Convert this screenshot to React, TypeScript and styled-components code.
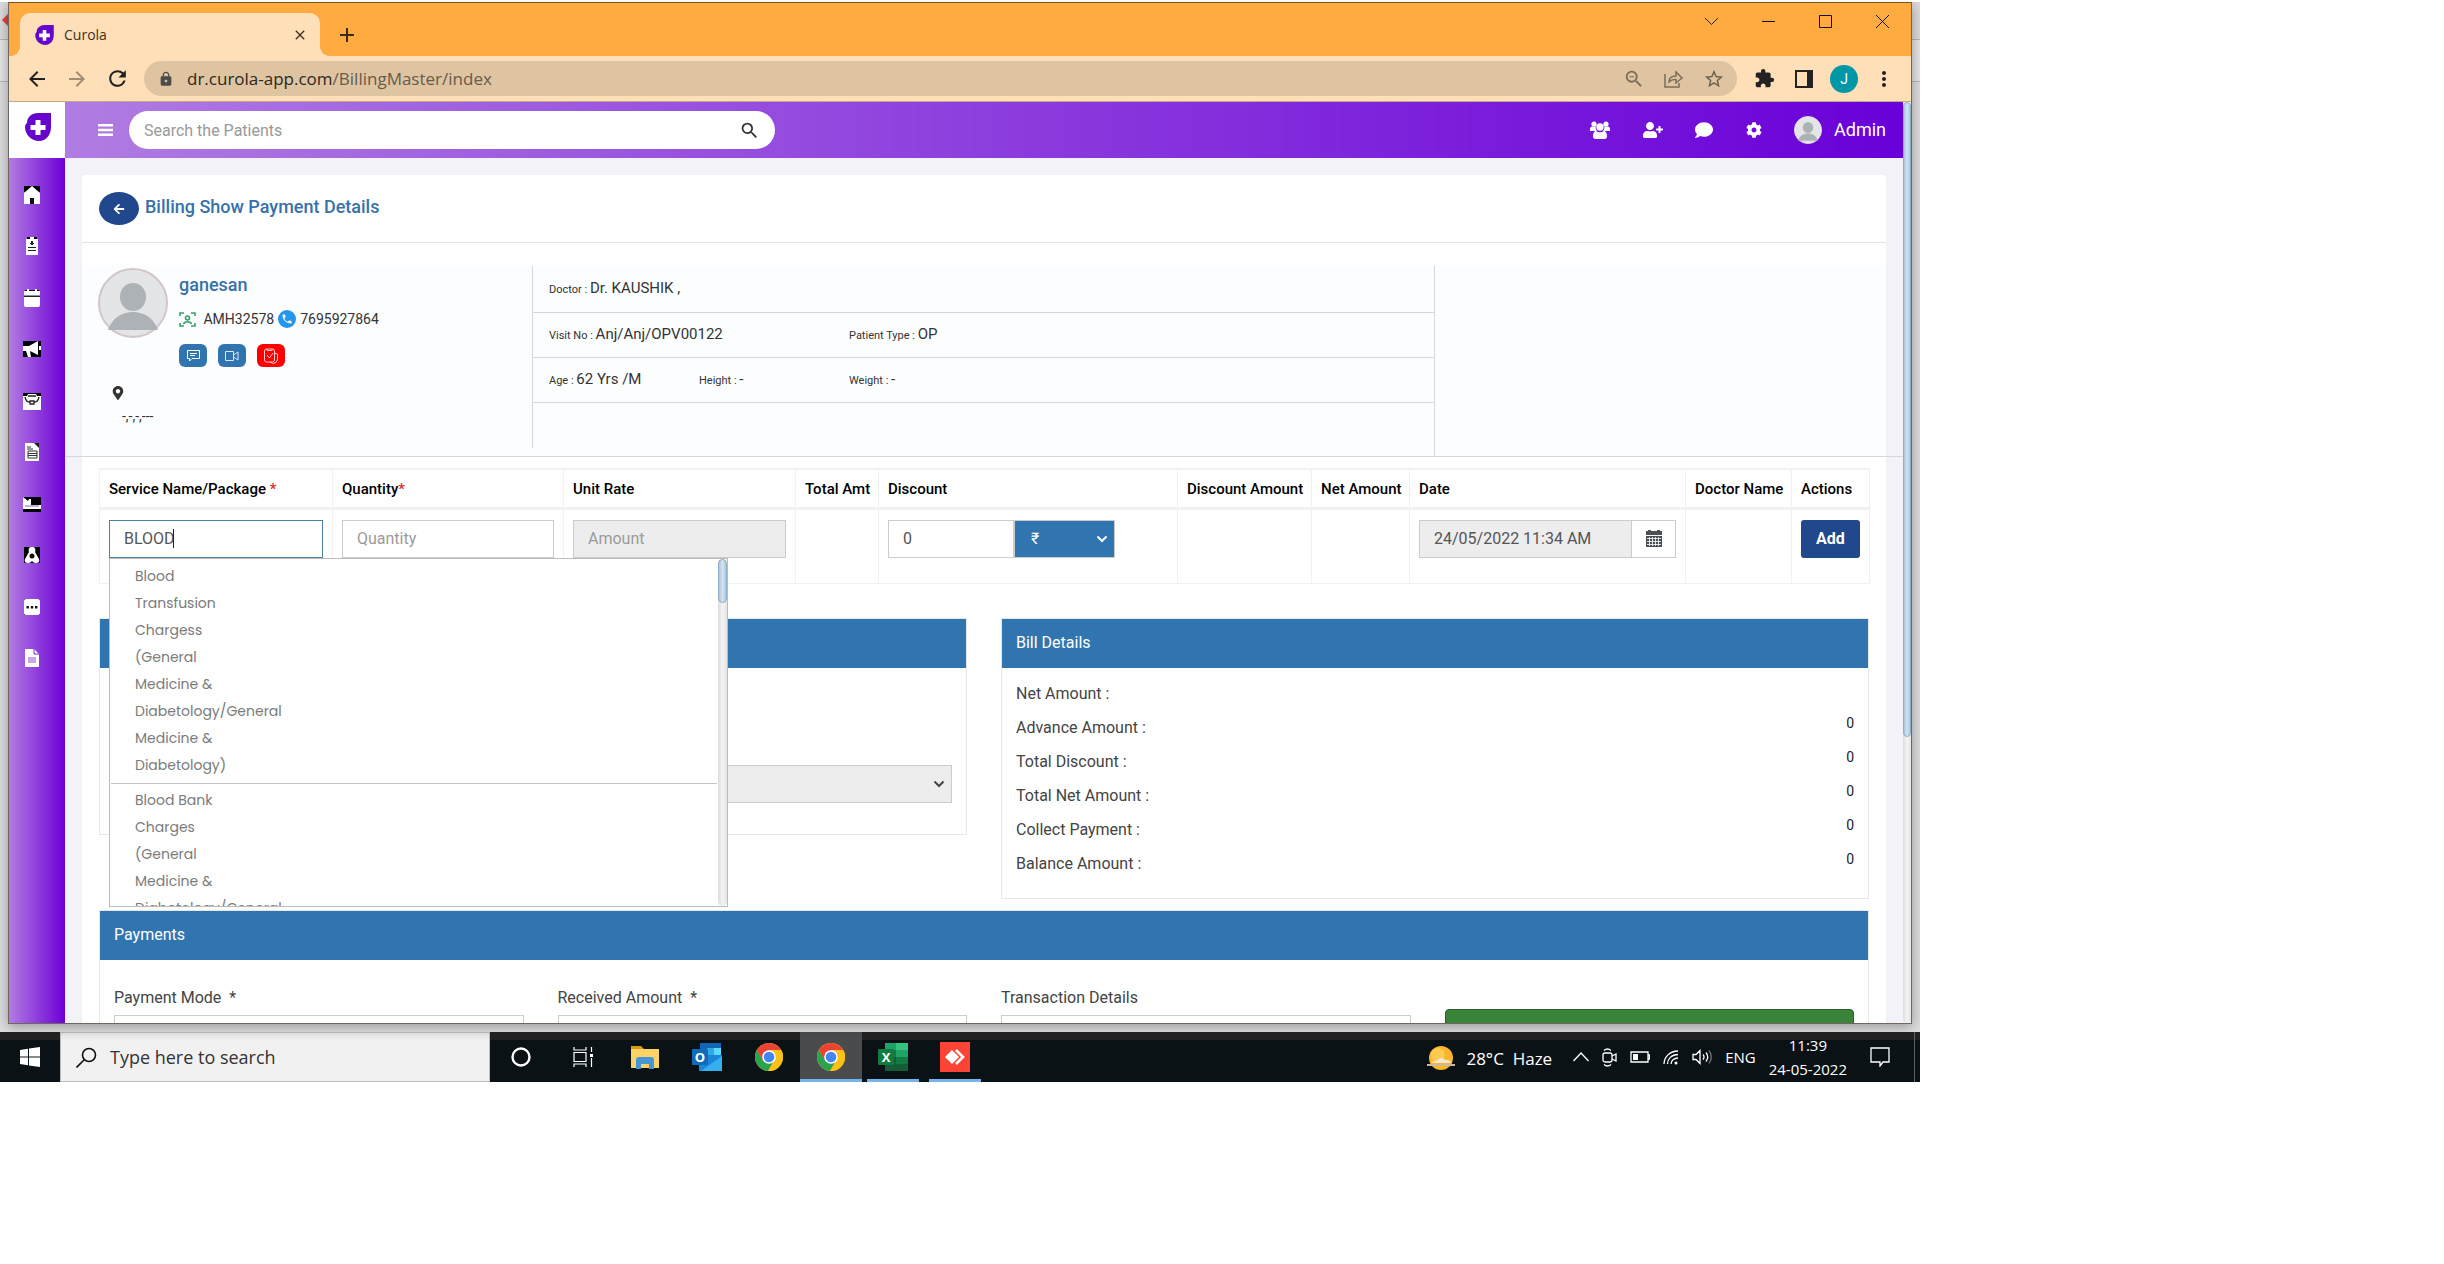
import React from 'react';
import styled, { createGlobalStyle, css } from 'styled-components';
import {
  MdArrowBack, MdArrowForward, MdRefresh, MdLock, MdZoomOut, MdStarBorder, MdExtension,
  MdMoreVert, MdAdd, MdClose, MdSearch, MdPhone,
} from 'react-icons/md';
import { FaUserPlus, FaComment, FaCog, FaArrowLeft, FaMapMarkerAlt } from 'react-icons/fa';

const UI = '"Roboto", "Liberation Sans", sans-serif';
const SYS = '"Segoe UI", "Open Sans", "Noto Sans", sans-serif';
const LINE = '#d6d7dc';
const BLUE = '#3175b0';

const Global = createGlobalStyle`
  *, *::before, *::after { box-sizing: border-box; }
  body { margin: 0; background: #fff; font-family: ${UI}; font-size: 14px; color: #333; }
  button, input, select { font-family: inherit; margin: 0; }
  button { cursor: pointer; }
  svg { display: block; flex: none; }
`;

/* ---------- desktop and browser window ---------- */

const Desktop = styled.div`
  position: relative;
  display: flex;
  flex-direction: column;
  width: 100%;
  max-width: 1920px;
  height: 100vh;
  max-height: 1080px;
  margin-top: 2px;
  overflow: hidden;
  background: linear-gradient(#dcdcdc 0 37px, #b4b4b4 37px 38px, #e6e6e6 38px 79px, #b9b9b9 79px 80px, #dedede 80px);
`;

const Diamond = styled.span`
  position: absolute;
  left: 4px;
  top: 13px;
  width: 10px;
  height: 10px;
  background: #e5433c;
  transform: rotate(45deg);
`;

const Browser = styled.div`
  position: relative;
  flex: 1;
  min-height: 0;
  margin: 0 8px 8px;
  display: flex;
  flex-direction: column;
  overflow: hidden;
  border: 1px solid #6d6661;
  border-top-color: #7a5222;
  box-shadow: 0 2px 12px rgba(0, 0, 0, 0.35);
  background: #fff;
`;

const TitleBar = styled.div`
  flex: none;
  display: flex;
  height: 53px;
  padding-left: 11px;
  background: #ffab40;
`;

const Tab = styled.div`
  position: relative;
  display: flex;
  align-items: center;
  gap: 10px;
  width: 300px;
  margin-top: 10px;
  padding: 0 12px 0 15px;
  border-radius: 10px 10px 0 0;
  background: #ffdfb7;
  font: 14px/20px ${SYS};
  color: #3d3123;
  &::before, &::after {
    content: '';
    position: absolute;
    bottom: 0;
    width: 10px;
    height: 10px;
  }
  &::before { left: -10px; background: radial-gradient(circle at 0 0, transparent 10px, #ffdfb7 10px); }
  &::after { right: -10px; background: radial-gradient(circle at 100% 0, transparent 10px, #ffdfb7 10px); }
`;

const TabName = styled.span`
  flex: 1;
`;

const PlainButton = styled.button`
  display: flex;
  align-items: center;
  justify-content: center;
  padding: 0;
  border: 0;
  background: none;
  color: inherit;
`;

const NewTab = styled(PlainButton)`
  align-self: center;
  width: 54px;
  height: 40px;
  padding-top: 10px;
  color: #3a2a12;
`;

const WinControls = styled.div`
  display: flex;
  align-items: flex-start;
  margin-left: auto;
`;

const WinButton = styled(PlainButton)`
  width: 57px;
  height: 36px;
`;

const Toolbar = styled.div`
  flex: none;
  display: flex;
  align-items: center;
  height: 46px;
  padding: 0 7px 0 8px;
  border-bottom: 1px solid #c3a98a;
  background: #ffdfb7;
  color: #222;
`;

const NavButton = styled(PlainButton)<{ $dim?: boolean }>`
  width: 40px;
  height: 36px;
  color: ${p => (p.$dim ? '#a08c72' : '#222')};
`;

const Address = styled.div`
  flex: 1;
  display: flex;
  align-items: center;
  gap: 13px;
  height: 35px;
  margin: 0 7px;
  padding: 0 3px 0 14px;
  border-radius: 18px;
  background: #dec4a1;
  font: 17px/24px ${SYS};
  color: #675b4b;
  b { font-weight: 400; color: #2b2822; }
`;

const Url = styled.span`
  flex: 1;
`;

const IconRow = styled.div`
  display: grid;
  grid-auto-flow: column;
  grid-auto-columns: 40px;
  place-items: center;
`;

const Profile = styled.span`
  display: grid;
  place-items: center;
  width: 28px;
  height: 28px;
  border-radius: 50%;
  background: #0097a7;
  color: #fff;
  font: 14px/20px ${UI};
`;

/* ---------- application shell ---------- */

const AppShell = styled.div`
  flex: 1;
  min-height: 0;
  display: flex;
  background: #f3f2f9;
`;

const Side = styled.nav`
  flex: none;
  display: flex;
  flex-direction: column;
  width: 56px;
  background: linear-gradient(90deg, #b07ce2, #6d00d6);
`;

const SideLogo = styled.a`
  display: flex;
  justify-content: center;
  height: 56px;
  padding: 11px 0 0 2px;
  background: #fff;
`;

const SideList = styled.ul`
  display: flex;
  flex-direction: column;
  justify-content: space-between;
  height: 509px;
  margin: 0;
  padding: 28px 0 0 13px;
  list-style: none;
  a { display: block; height: 18px; }
`;

const Page = styled.div`
  flex: 1;
  min-width: 0;
  display: flex;
  flex-direction: column;
  overflow: hidden;
`;

const TopBar = styled.header`
  flex: none;
  display: flex;
  align-items: center;
  height: 56px;
  padding: 0 17px 0 33px;
  background: linear-gradient(90deg, #b07ce2, #6a00d9);
  color: #fff;
`;

const SearchBox = styled.label`
  display: flex;
  align-items: center;
  width: 646px;
  height: 38px;
  margin-left: 16px;
  padding: 0 15px;
  border-radius: 19px;
  background: #fff;
  color: #333;
  input {
    flex: 1;
    min-width: 0;
    padding: 0;
    border: 0;
    outline: 0;
    background: none;
    font-size: 16px;
    color: #555;
  }
  input::placeholder { color: #999; }
`;

const TopIcons = styled.div`
  display: flex;
  align-items: center;
  justify-content: space-between;
  width: 172px;
  margin-left: auto;
`;

const Account = styled(PlainButton)`
  gap: 12px;
  margin-left: 32px;
  font-size: 18px;
  line-height: 24px;
`;

const Main = styled.main`
  flex: 1;
  min-height: 0;
  padding: 17px 17px 0;
`;

const Card = styled.section`
  min-height: 100%;
  border-radius: 2px;
  background: #fff;
`;

const CardHead = styled.div`
  display: flex;
  align-items: center;
  gap: 6px;
  height: 68px;
  padding: 0 17px;
  border-bottom: 1px solid #e6e6ea;
  h1 { margin: 0; padding-bottom: 3px; font-size: 18px; font-weight: 500; line-height: 24px; color: #3771a9; }
`;

const Back = styled(PlainButton)`
  width: 40px;
  height: 33px;
  border-radius: 50%;
  background: #21478d;
  color: #fff;
`;

const Patient = styled.div`
  display: grid;
  grid-template-columns: 468px 902px 1fr;
  margin: 23px -17px 0;
  border-bottom: 1px solid ${LINE};
  background: linear-gradient(90deg, transparent 17px, #fcfdfe 17px calc(100% - 17px), transparent calc(100% - 17px));
`;

const Person = styled.div`
  height: 182px;
  margin-bottom: 8px;
  padding: 2px 0 0 33px;
  border-right: 1px solid ${LINE};
`;

const PersonTop = styled.div`
  display: flex;
  gap: 11px;
  h2 { margin: 5px 0 10px; font-size: 18px; font-weight: 500; line-height: 24px; color: #3771a9; }
`;

const Ids = styled.div`
  display: flex;
  align-items: center;
  gap: 4px;
  height: 24px;
  font-size: 14px;
  line-height: 20px;
`;

const PhoneDot = styled.span`
  display: grid;
  place-items: center;
  width: 18px;
  height: 18px;
  border-radius: 50%;
  background: #2496ee;
  color: #fff;
`;

const Chips = styled.div`
  display: flex;
  gap: 11px;
  margin-top: 13px;
`;

const Chip = styled(PlainButton)<{ $red?: boolean }>`
  width: 28px;
  height: 23px;
  border-radius: 6px;
  background: ${p => (p.$red ? '#ff0000' : BLUE)};
  color: #fff;
`;

const Place = styled.address`
  padding: 19px 0 0 13px;
  font-style: normal;
  font-size: 14px;
  line-height: 20px;
  p { margin: 6px 0 0 11px; }
`;

const Facts = styled.div`
  border-right: 1px solid ${LINE};
`;

const FactRow = styled.div`
  display: grid;
  grid-template-columns: 150px 150px 1fr;
  align-items: center;
  height: 45px;
  padding-left: 16px;
  border-bottom: 1px solid ${LINE};
  &:first-child { height: 47px; }
`;

const Fact = styled.span<{ $wide?: boolean }>`
  grid-column: span ${p => (p.$wide ? 2 : 1)};
  font-size: 11px;
  line-height: 20px;
  b { font-size: 15px; font-weight: 400; }
`;

const Body = styled.div`
  padding: 11px 17px 0;
`;

/* ---------- service entry table ---------- */

const Services = styled.table`
  width: 100%;
  table-layout: fixed;
  border-collapse: collapse;
  th, td { border: 1px solid #f1f1f1; text-align: left; vertical-align: top; }
  th {
    height: 39px;
    padding: 9px 0 0 9px;
    border-top: 2px solid #f1f1f1;
    border-bottom: 3px solid #f1f1f1;
    font-size: 15px;
    font-weight: 500;
    line-height: 20px;
    white-space: nowrap;
    color: #000;
  }
  td { height: 75px; padding: 10px 9px 0; }
`;

const Star = styled.span`
  color: #e02b2b;
`;

const fieldBox = css`
  width: 100%;
  height: 38px;
  padding: 0 14px;
  border: 1px solid #ccc;
  border-radius: 0;
  outline: 0;
  font-size: 16px;
  line-height: 24px;
  color: #555;
  background: #fff;
`;

const Field = styled.input<{ $active?: boolean }>`
  ${fieldBox}
  display: block;
  border-color: ${p => (p.$active ? '#4b83a0' : '#ccc')};
  &:read-only { background: #ededed; }
  &::placeholder { color: #9b9b9b; opacity: 1; }
`;

const SelectBox = styled.div<{ $tone: 'blue' | 'grey' }>`
  position: relative;
  flex: 1;
  color: ${p => (p.$tone === 'blue' ? '#fff' : '#444')};
  select {
    ${fieldBox}
    display: block;
    appearance: none;
    padding: 0 16px;
    color: inherit;
    background: ${p => (p.$tone === 'blue' ? BLUE : '#ededed')};
  }
  svg { position: absolute; right: 7px; top: 15px; pointer-events: none; }
`;

const DiscountGroup = styled.div`
  display: grid;
  grid-template-columns: 126px 101px;
`;

const DateGroup = styled.div`
  display: grid;
  grid-template-columns: 1fr 44px;
`;

const DateButton = styled(PlainButton)`
  border: 1px solid #ccc;
  border-left: 0;
  background: #fff;
  color: #444;
`;

const AddButton = styled.button`
  width: 100%;
  height: 38px;
  padding: 0;
  border: 0;
  border-radius: 3px;
  background: #21478d;
  color: #fff;
  font-size: 16px;
  font-weight: 700;
`;

const Combo = styled.div`
  position: relative;
`;

const Caret = styled.span`
  position: absolute;
  left: 64px;
  top: 9px;
  width: 1px;
  height: 19px;
  background: #222;
`;

const Menu = styled.div`
  position: absolute;
  z-index: 2;
  left: 0;
  top: 38px;
  display: flex;
  width: 619px;
  height: 349px;
  border: 1px solid #bcbcbc;
  background: #fff;
`;

const Options = styled.ul`
  flex: 1;
  height: 100%;
  margin: 0;
  padding: 1px 1px 0;
  overflow: hidden;
  list-style: none;
`;

const Option = styled.li`
  padding: 3px 0 4px 24px;
  border-bottom: 1px solid #c4c4c4;
  font-family: "Poppins", "Lato", sans-serif;
  font-size: 14px;
  line-height: 27px;
  color: #7b7b7b;
  span { display: block; width: 104px; }
`;

const Track = styled.div<{ $w: number }>`
  flex: none;
  width: ${p => p.$w}px;
  border-radius: 5px;
  background: linear-gradient(90deg, #dcdcdc, #f3f3f3 50%, #e4e4e4);
`;

const Thumb = styled.div<{ $h: string }>`
  height: ${p => p.$h};
  border-radius: 5px;
  border: 1px solid #8fb0cb;
  background: linear-gradient(90deg, #a9c3d9, #d5e3ef 50%, #aec7dc);
`;

/* ---------- panels ---------- */

const PanelRow = styled.div`
  display: grid;
  grid-template-columns: 1fr 1fr;
  align-items: start;
  gap: 34px;
  margin-top: 34px;
`;

const Panel = styled.section`
  border: 1px solid #e7e7ea;
  background: #fff;
  > h3 {
    height: 49px;
    margin: 0;
    padding: 0 14px;
    background: ${BLUE};
    color: #fff;
    font-size: 16px;
    font-weight: 400;
    line-height: 48px;
  }
`;

const DiscountBody = styled.div`
  padding: 97px 14px 31px;
`;

const Bill = styled.dl`
  margin: 0;
  padding: 9px 14px 17px;
  div { display: flex; justify-content: space-between; height: 34px; }
  dt { font-size: 16px; line-height: 34px; color: #444; }
  dd { margin: 0; font-size: 14px; line-height: 24px; color: #1d1d2b; }
`;

const Payments = styled(Panel)`
  margin-top: 11px;
`;

const PayGrid = styled.div`
  display: grid;
  grid-template-columns: repeat(4, 1fr);
  gap: 34px;
  padding: 26px 14px;
  label { display: block; margin-bottom: 5px; font-size: 16px; line-height: 24px; color: #444; }
`;

const Collect = styled.button`
  height: 44px;
  margin-top: 23px;
  border: 1px solid #2d5f2c;
  border-radius: 4px;
  background: #3a8439;
`;

/* ---------- taskbar ---------- */

const TaskBar = styled.footer`
  flex: none;
  display: flex;
  height: 50px;
  background: linear-gradient(#222 0 8px, #0b1216 8px);
  color: #fff;
  font: 17px/24px ${SYS};
`;

const Start = styled(PlainButton)`
  width: 60px;
`;

const TaskSearch = styled.label`
  display: flex;
  align-items: center;
  gap: 13px;
  width: 430px;
  padding: 0 15px;
  border: 1px solid #bdbdbd;
  background: linear-gradient(#e6e6e6, #f1f1f1 8px);
  color: #222;
  input {
    flex: 1;
    padding: 0;
    border: 0;
    outline: 0;
    background: none;
    font-size: 18px;
    color: #333;
  }
  input::placeholder { color: #333; opacity: 1; }
`;

const Apps = styled.div`
  display: flex;
  align-items: stretch;
`;

const AppButton = styled(PlainButton)<{ $on?: boolean; $open?: boolean }>`
  width: 62px;
  border-bottom: 3px solid ${p => (p.$open ? '#76b4ee' : 'transparent')};
  border-top: 3px solid transparent;
  background: ${p => (p.$on ? '#4a4b4c' : 'none')};
  ${p => p.$open && !p.$on && css`width: 52px; margin: 0 5px;`}
`;

const Tray = styled.div`
  display: flex;
  align-items: center;
  gap: 13px;
  margin-left: auto;
  padding-right: 5px;
`;

const Weather = styled.span`
  display: flex;
  align-items: center;
  gap: 11px;
  margin-right: 8px;
  padding-top: 3px;
`;

const Clock = styled.time`
  display: flex;
  flex-direction: column;
  align-items: center;
  margin-right: 10px;
  font-size: 15px;
  line-height: 24px;
`;

const Lang = styled.span`
  font-size: 15px;
`;

const Edge = styled.span`
  align-self: stretch;
  width: 1px;
  margin-left: 11px;
  background: #5d6164;
`;

/* ---------- drawings ---------- */

const Logo = ({ w, h }: { w: number; h: number }) => (
  <svg width={w} height={h} viewBox="0 0 26 28">
    <path d="M2 10C2 4 7 0 13 0h13v14c0 8-5 14-12 14S0 22 0 14c0-1.500.8-3 2-4z" fill="#6606cc" />
    <path d="M10.500 7h5v5h5v5h-5v5h-5v-5h-5v-5h5z" fill="#fff" />
  </svg>
);

const Bust = ({ size, ring }: { size: number; ring?: boolean }) => (
  <svg width={size} height={size} viewBox="0 0 70 70">
    <circle cx="35" cy="35" r="34" fill="#e3e5e7" stroke={ring ? '#d3c6ca' : '#e3e5e7'} strokeWidth="2" />
    <ellipse cx="35" cy="29" rx="13" ry="14" fill="#acb2b6" />
    <path d="M10 62c4-12 14-18 25-18s21 6 25 18z" fill="#acb2b6" />
  </svg>
);

const Group = () => (
  <svg width="20" height="18" viewBox="0 0 20 18" fill="#fff">
    <circle cx="4" cy="3" r="2.600" /><circle cx="16" cy="3" r="2.600" />
    <path d="M0 10V8c0-1.500 1-2.500 2-2.500h3c.3 0 .6 0 .8.300C5.500 7.500 6 9 7 10H1c-.6 0-1 0-1 0zM20 10V8c0-1.500-1-2.500-2-2.500h-3c-.3 0-.6 0-.8.300.3 1.700-.2 3.200-1.200 4.200h6c.6 0 1 0 1 0z" />
    <circle cx="10" cy="6" r="3.700" />
    <path d="M3 15.500c0-3 1-5.500 3.300-5.500 1 .8 2.300 1.300 3.700 1.300s2.700-.5 3.700-1.300c2.300 0 3.300 2.500 3.300 5.500 0 1.500-1 2.500-2.500 2.500h-9C4 18 3 17 3 15.500z" />
  </svg>
);

const Chevron = () => (
  <svg width="12" height="8" viewBox="0 0 12 8" fill="none" stroke="currentColor" strokeWidth="2">
    <path d="M1.500 1.500 6 6l4.500-4.500" />
  </svg>
);

const SideIcon = ({ kind }: { kind: number }) => {
  const shapes = [
    <><path d="M0 0h16v6H0z" fill="#000" /><path d="M0 7 8 0l8 7v11H0z" /><path d="M6 12h4v6H6z" fill="#111" /></>,
    <><path d="M3 0h10v4H3z" fill="#000" /><path d="M2 2h4V0h4v2h4v16H2z" /><path d="M7 4h2v4H7zM4 10h8v1H4zM4 13h8v1H4zM6 6h4v1H6z" fill="#222" /></>,
    <><path d="M1 1h14v4H1z" fill="#000" /><path d="M0 2h3V0h2v2h6V0h2v2h3v5H0zM0 8h16v8.500L15 18H1l-1-1.500z" /><path d="M0 6.500h16v1.500H0z" fill="#222" /></>,
    <><path d="M-1 1h18v16H-1z" fill="#000" /><path d="M-1 6h6l9-5v14l-8-4 1 6H4l-2-6h-3zM15 6h2v4h-2z" /></>,
    <><path d="M-1 1h18v6H-1z" fill="#000" /><path d="M-1 4h4l1-2h8l1 2h4v14H-1z" /><path d="M1 5c1 5 3 5 5 5M15 5c-1 5-3 5-5 5M4 4h8M6 9h4v3H6z" fill="none" stroke="#222" strokeWidth="1.300" /></>,
    <><path d="M10 0h5v5h-5z" fill="#222" /><path d="M1 0h9l5 5v13H1z" /><path d="M4 8h9v7H4zM4 10.500h9M4 12.500h9M3 4h4M3 6h6" fill="none" stroke="#333" /></>,
    <><path d="M-1 2h18v15H-1z" fill="#000" /><path d="M-1 2l5 4 1-2h2v6h10v4H-1z" /><path d="M1 11h14" stroke="#8a5bc0" /></>,
    <><path d="M0 1h16v16H0z" fill="#000" /><path d="M8 1c3 0 4 2 3 5l4 7c1 3-1 4-3 4-2 0-3-1-4-2-1 1-2 2-4 2-2 0-4-1-3-4l4-7C4 3 5 1 8 1z" /><circle cx="8" cy="10" r="2.500" fill="#111" /></>,
    <><path d="M0 1h16v16H0z" fill="#111" /><rect y="1" width="16" height="16" rx="2" /><path d="M2.500 8h2.400v2.400H2.500zM6.800 8h2.400v2.400H6.800zM11 8h2.400v2.400H11z" fill="#111" /></>,
    <><path d="M1 0h9l5 5v13H1z" /><path d="M4 8h8v6H4z" fill="#c8a6ea" /><path d="M10 0v5h5" fill="none" stroke="#7d2bd0" /></>,
  ];
  return <svg width="20" height="18" viewBox="-2 0 20 18" fill="#fff">{shapes[kind]}</svg>;
};

const Scan = () => (
  <svg width="17" height="15" viewBox="0 0 17 15" fill="none" stroke="#35a06c" strokeWidth="1.600">
    <path d="M1 4V1h4M12 1h4v3M16 11v3h-4M5 14H1v-3" /><circle cx="8.500" cy="6" r="2" /><path d="M4.500 12c1-3 7-3 8 0" />
  </svg>
);

const Calendar = () => (
  <svg width="16" height="17" viewBox="0 0 16 17">
    <path d="M0 1h2V0h3v1h6V0h3v1h2v4H0zM0 6h16v11H0z" fill="#4a4f55" />
    <path d="M1 8.500h14M1 11.500h14M1 14.500h14M3.500 7v9M6.500 7v9M9.500 7v9M12.500 7v9" stroke="#fff" strokeWidth=".8" />
  </svg>
);

const Share = () => (
  <svg width="20" height="18" viewBox="0 0 20 18" fill="none" stroke="#7a6c58" strokeWidth="1.500">
    <path d="M1 4v13h14v-4" /><path d="M5 12c0-4 3-6 7-6V2l6 6-6 5V9.500C9 9 7 10 5 12z" />
  </svg>
);

const ChromeMark = () => (
  <svg width="28" height="28" viewBox="0 0 28 28">
    <circle cx="14" cy="14" r="14" fill="#fbc116" />
    <path d="M1.900 7A14 14 0 0 1 26.100 7H14z" fill="#ea4335" />
    <path d="M1.900 7A14 14 0 0 0 13 28l6.500-11-5.500 3-6-3z" fill="#2ba24c" />
    <path d="M1.900 7 8 17.500 14 7z" fill="#ea4335" />
    <path d="M26.100 7H14v7l5.500 3L13 28A14 14 0 0 0 26.100 7z" fill="#fbc116" />
    <circle cx="14" cy="14" r="6.800" fill="#fff" /><circle cx="14" cy="14" r="5.300" fill="#4285f4" />
  </svg>
);

const Folder = () => (
  <svg width="28" height="24" viewBox="0 0 28 24">
    <path d="M0 1h10l3 3v3H0z" fill="#d99a13" /><path d="M0 4h28v19H0z" fill="#fcd364" />
    <path d="M5 24V15q0-3 3-3h12q3 0 3 3v9h-5v-5h-8v5z" fill="#4596d6" />
  </svg>
);

const Outlook = () => (
  <svg width="30" height="28" viewBox="0 0 30 28">
    <path d="M8 0h21v12H8z" fill="#1066b5" /><path d="M15 5h7v7h-7z" fill="#32a9e7" /><path d="M22 5h7v7h-7z" fill="#58d9fd" />
    <path d="M7 12h23v16H7z" fill="#1a86d9" /><path d="M30 13v15H9z" fill="#35b0ee" />
    <rect y="6" width="16" height="16" rx="1" fill="#0f6cbd" />
    <text x="8" y="19" textAnchor="middle" fontFamily="Open Sans, sans-serif" fontSize="13" fontWeight="700" fill="#fff">O</text>
  </svg>
);

const Excel = () => (
  <svg width="30" height="28" viewBox="0 0 30 28">
    <path d="M7 0h12v7H7z" fill="#21a366" /><path d="M18 0h12v7H18z" fill="#33c481" />
    <path d="M7 7h12v7H7z" fill="#107c41" /><path d="M18 7h12v7H18z" fill="#21a366" />
    <path d="M7 14h12v14H7z" fill="#185c37" /><path d="M18 14h12v7H18z" fill="#107c41" /><path d="M18 21h12v7H18z" fill="#185c37" />
    <rect y="6" width="16" height="16" rx="1" fill="#107c41" />
    <text x="8" y="19" textAnchor="middle" fontFamily="Open Sans, sans-serif" fontSize="13" fontWeight="700" fill="#fff">X</text>
  </svg>
);

const AnyDesk = () => (
  <svg width="30" height="30" viewBox="0 0 30 30">
    <path d="M0 0h30v30H0z" fill="#fb4336" /><path d="m5 15 7-7 7 7-7 7z" fill="#fff" />
    <path d="m16 8 7 7-7 7" fill="none" stroke="#fff" strokeWidth="2.600" />
  </svg>
);

const TaskView = () => (
  <svg width="20" height="20" viewBox="0 0 20 20" fill="none" stroke="#fff" strokeWidth="1.200">
    <path d="M1 0v3h12V0M1 5.500h12v9H1zM1 20v-3h12v3M18.500 0v5M18.500 11v9" /><path d="M17 7h3v3h-3z" fill="#fff" stroke="none" />
  </svg>
);

const Sun = () => (
  <svg width="28" height="25" viewBox="0 0 28 25">
    <circle cx="14" cy="12" r="12" fill="#fbb62c" /><circle cx="11" cy="9" r="7" fill="#ffd35e" opacity=".7" />
    <path d="M4 17q3-3 6-2 3-6 8-1 4-1 7 3z" fill="#f6e7cd" /><path d="M0 19h28" stroke="#cfb994" strokeWidth="2" />
  </svg>
);

const trayLine = { fill: 'none', stroke: '#fff', strokeWidth: 1.3 };

const columns: [string, number, string?][] = [
  ['Service Name/Package ', 233, '*'], ['Quantity', 231, '*'], ['Unit Rate', 232], ['Total Amt', 83],
  ['Discount', 299], ['Discount Amount', 134], ['Net Amount', 98], ['Date', 276], ['Doctor Name', 106], ['Actions', 78],
];

const options = [
  'Blood Transfusion Chargess (General Medicine & Diabetology/General Medicine & Diabetology)',
  'Blood Bank Charges (General Medicine & Diabetology/General',
];

const bill: [string, string][] = [
  ['Net Amount :', ''], ['Advance Amount :', '0'], ['Total Discount :', '0'],
  ['Total Net Amount :', '0'], ['Collect Payment :', '0'], ['Balance Amount :', '0'],
];

const sideNames = ['Home', 'Records', 'Calendar', 'Campaigns', 'Services', 'Billing', 'Beds', 'Network', 'More', 'Reports'];

export default function App() {
  return (
    <>
      <Global />
      <Desktop>
        <Diamond />
        <Browser>
          <TitleBar>
            <Tab>
              <Logo w={19} h={20} />
              <TabName>Curola</TabName>
              <PlainButton aria-label="Close tab"><MdClose size={16} /></PlainButton>
            </Tab>
            <NewTab aria-label="New tab"><MdAdd size={24} /></NewTab>
            <WinControls>
              <WinButton aria-label="Tab list"><svg width="13" height="13" viewBox="0 0 13 13" fill="none" stroke="#222"><path d="m0 3 6.500 6.500L13 3" /></svg></WinButton>
              <WinButton aria-label="Minimise"><svg width="13" height="13" viewBox="0 0 13 13" stroke="#111"><path d="M0 6.500h13" /></svg></WinButton>
              <WinButton aria-label="Maximise"><svg width="13" height="13" viewBox="0 0 13 13" fill="none" stroke="#111"><path d="M.5.5h12v12H.5z" /></svg></WinButton>
              <WinButton aria-label="Close"><svg width="13" height="13" viewBox="0 0 13 13" stroke="#111"><path d="m0 0 13 13M13 0 0 13" /></svg></WinButton>
            </WinControls>
          </TitleBar>
          <Toolbar>
            <NavButton aria-label="Back"><MdArrowBack size={24} /></NavButton>
            <NavButton aria-label="Forward" $dim><MdArrowForward size={24} /></NavButton>
            <NavButton aria-label="Reload"><MdRefresh size={25} /></NavButton>
            <Address>
              <MdLock size={16} color="#4c4c4c" />
              <Url><b>dr.curola-app.com</b>/BillingMaster/index</Url>
              <IconRow>
                <MdZoomOut size={22} color="#7a6c58" />
                <Share />
                <MdStarBorder size={22} color="#6b5f4e" />
              </IconRow>
            </Address>
            <IconRow>
              <MdExtension size={21} />
              <svg width="18" height="18" viewBox="0 0 18 18"><path d="M1 1h16v16H1z" fill="none" stroke="#222" strokeWidth="2" /><path d="M12 0h6v18h-6z" fill="#222" /></svg>
              <Profile>J</Profile>
              <MdMoreVert size={24} />
            </IconRow>
          </Toolbar>

          <AppShell>
            <Side>
              <SideLogo href="#" aria-label="Curola"><Logo w={26} h={28} /></SideLogo>
              <SideList>
                {sideNames.map((n, i) => (
                  <li key={n}><a href="#" aria-label={n}><SideIcon kind={i} /></a></li>
                ))}
              </SideList>
            </Side>

            <Page>
              <TopBar>
                <PlainButton aria-label="Menu">
                  <svg width="15" height="12" viewBox="0 0 15 12" fill="#fff"><path d="M0 0h15v2.600H0zM0 4.700h15v2.600H0zM0 9.400h15V12H0z" /></svg>
                </PlainButton>
                <SearchBox>
                  <input placeholder="Search the Patients" aria-label="Search the Patients" />
                  <MdSearch size={21} />
                </SearchBox>
                <TopIcons>
                  <Group /><FaUserPlus size={20} /><FaComment size={18} /><FaCog size={16} />
                </TopIcons>
                <Account><Bust size={28} />Admin</Account>
              </TopBar>

              <Main>
                <Card>
                  <CardHead>
                    <Back aria-label="Go back"><FaArrowLeft size={12} /></Back>
                    <h1>Billing Show Payment Details</h1>
                  </CardHead>

                  <Patient>
                    <Person>
                      <PersonTop>
                        <Bust size={70} ring />
                        <div>
                          <h2>ganesan</h2>
                          <Ids>
                            <Scan /><span>&nbsp;AMH32578</span>
                            <PhoneDot><MdPhone size={12} /></PhoneDot><span>7695927864</span>
                          </Ids>
                          <Chips>
                            <Chip aria-label="Message">
                              <svg width="13" height="12" viewBox="0 0 13 12" fill="none" stroke="#fff"><path d="M.5.5h12v8H5l-2.500 2.500V8.500h-2zM3 3.500h7M3 5.500h5" /></svg>
                            </Chip>
                            <Chip aria-label="Video call">
                              <svg width="14" height="10" viewBox="0 0 14 10" fill="none" stroke="#d9e8f5"><path d="M.5.5h8v9h-8zM8.500 4l4.500-3v8L8.500 6" /></svg>
                            </Chip>
                            <Chip aria-label="Visit card" $red>
                              <svg width="15" height="16" viewBox="0 0 15 16" fill="none" stroke="#ffc9c9"><rect x=".5" y="1" width="10" height="13" rx="2" /><path d="M3 1v1.500h5V1M3 7l2.500 3L9 5M10.500 5l3 1v6q-1 3-4 3.500L6 14" /></svg>
                            </Chip>
                          </Chips>
                        </div>
                      </PersonTop>
                      <Place>
                        <FaMapMarkerAlt size={14} />
                        <p>-,-,-,---</p>
                      </Place>
                    </Person>
                    <Facts>
                      <FactRow><Fact $wide>Doctor : <b>Dr. KAUSHIK ,</b></Fact></FactRow>
                      <FactRow>
                        <Fact $wide>Visit No : <b>Anj/Anj/OPV00122</b></Fact>
                        <Fact>Patient Type : <b>OP</b></Fact>
                      </FactRow>
                      <FactRow>
                        <Fact>Age : <b>62 Yrs /M</b></Fact>
                        <Fact>Height : <b>-</b></Fact>
                        <Fact>Weight : <b>-</b></Fact>
                      </FactRow>
                    </Facts>
                  </Patient>

                  <Body>
                    <Services>
                      <colgroup>{columns.map(c => <col key={c[0]} width={c[1]} />)}</colgroup>
                      <thead>
                        <tr>{columns.map(c => <th key={c[0]}>{c[0]}{c[2] && <Star>{c[2]}</Star>}</th>)}</tr>
                      </thead>
                      <tbody>
                        <tr>
                          <td>
                            <Combo>
                              <Field $active defaultValue="BLOOD" aria-label="Service Name/Package" />
                              <Caret />
                              <Menu>
                                <Options>
                                  {options.map(o => <Option key={o}><span>{o}</span></Option>)}
                                </Options>
                                <Track $w={9}><Thumb $h="44px" /></Track>
                              </Menu>
                            </Combo>
                          </td>
                          <td><Field placeholder="Quantity" aria-label="Quantity" /></td>
                          <td><Field placeholder="Amount" readOnly aria-label="Unit Rate" /></td>
                          <td />
                          <td>
                            <DiscountGroup>
                              <Field defaultValue="0" aria-label="Discount" />
                              <SelectBox $tone="blue">
                                <select aria-label="Discount type"><option>₹</option></select>
                                <Chevron />
                              </SelectBox>
                            </DiscountGroup>
                          </td>
                          <td />
                          <td />
                          <td>
                            <DateGroup>
                              <Field defaultValue="24/05/2022 11:34 AM" readOnly aria-label="Date" />
                              <DateButton aria-label="Pick a date"><Calendar /></DateButton>
                            </DateGroup>
                          </td>
                          <td />
                          <td><AddButton>Add</AddButton></td>
                        </tr>
                      </tbody>
                    </Services>

                    <PanelRow>
                      <Panel>
                        <h3 />
                        <DiscountBody>
                          <SelectBox $tone="grey"><select aria-label="Discount by" /><Chevron /></SelectBox>
                        </DiscountBody>
                      </Panel>
                      <Panel>
                        <h3>Bill Details</h3>
                        <Bill>
                          {bill.map(([k, v]) => <div key={k}><dt>{k}</dt><dd>{v}</dd></div>)}
                        </Bill>
                      </Panel>
                    </PanelRow>

                    <Payments>
                      <h3>Payments</h3>
                      <PayGrid>
                        <div><label htmlFor="mode">Payment Mode &nbsp;*</label><Field id="mode" /></div>
                        <div><label htmlFor="received">Received Amount &nbsp;*</label><Field id="received" /></div>
                        <div><label htmlFor="details">Transaction Details</label><Field id="details" /></div>
                        <Collect aria-label="Collect payment" />
                      </PayGrid>
                    </Payments>
                  </Body>
                </Card>
              </Main>
            </Page>
            <Track $w={8}><Thumb $h="69%" /></Track>
          </AppShell>
        </Browser>

        <TaskBar>
          <Start aria-label="Start">
            <svg width="20" height="20" viewBox="0 0 20 20" fill="#fff"><path d="M0 3l8-1.200v7.700H0zM9 1.600 20 0v9.500H9zM0 10.500h8v7.700L0 17zM9 10.500h11V20L9 18.400z" /></svg>
          </Start>
          <TaskSearch>
            <svg width="21" height="21" viewBox="0 0 21 21" fill="none" stroke="#111" strokeWidth="1.600"><circle cx="13" cy="8" r="6.500" /><path d="m8.500 12.500-8 8" /></svg>
            <input placeholder="Type here to search" aria-label="Type here to search" />
          </TaskSearch>
          <Apps>
            <AppButton aria-label="Cortana"><svg width="20" height="20" viewBox="0 0 20 20"><circle cx="10" cy="10" r="8.500" fill="none" stroke="#fff" strokeWidth="2.400" /></svg></AppButton>
            <AppButton aria-label="Task view"><TaskView /></AppButton>
            <AppButton aria-label="Files"><Folder /></AppButton>
            <AppButton aria-label="Outlook"><Outlook /></AppButton>
            <AppButton aria-label="Chrome"><ChromeMark /></AppButton>
            <AppButton aria-label="Chrome window" $on $open><ChromeMark /></AppButton>
            <AppButton aria-label="Excel" $open><Excel /></AppButton>
            <AppButton aria-label="AnyDesk" $open><AnyDesk /></AppButton>
          </Apps>
          <Tray>
            <Weather><Sun /><span>28°C&nbsp; Haze</span></Weather>
            <svg width="16" height="10" viewBox="0 0 16 10" {...trayLine}><path d="m.5 9 7.500-8 7.500 8" /></svg>
            <svg width="15" height="19" viewBox="0 0 15 19" {...trayLine}><rect x="1" y="5" width="9" height="9" rx="2" /><path d="m10 8 4-2v7l-4-2M2 2.500q3.500-3 7 0M2 16.500q3.500 3 7 0" /></svg>
            <svg width="20" height="12" viewBox="0 0 20 12" {...trayLine}><path d="M1 1h17v10H1zM18 4h1.500v4H18" /><path d="M3 3h5v6H3z" fill="#fff" stroke="none" /></svg>
            <svg width="16" height="15" viewBox="0 0 16 15" {...trayLine}><path d="M1 14C1 7 7 1 15 1M4.500 14c0-5 4-9.500 10.500-9.500M8 14c0-3.500 3-6 7-6" /><circle cx="13" cy="13" r="1.500" fill="#fff" stroke="none" /></svg>
            <svg width="20" height="16" viewBox="0 0 20 16" {...trayLine}><path d="M1 5.500h3l4-4v13l-4-4H1zM11 5.500q2 2.500 0 5M14 3.500q3.500 4.500 0 9" /><path d="M17 1.500q4.500 6.500 0 13" stroke="#777" /></svg>
            <Lang>ENG</Lang>
            <Clock><span>11:39</span><span>24-05-2022</span></Clock>
            <svg width="20" height="20" viewBox="0 0 20 20" {...trayLine}><path d="M1 1h18v14h-6l-3 4v-4H1z" /></svg>
            <Edge />
          </Tray>
        </TaskBar>
      </Desktop>
    </>
  );
}
